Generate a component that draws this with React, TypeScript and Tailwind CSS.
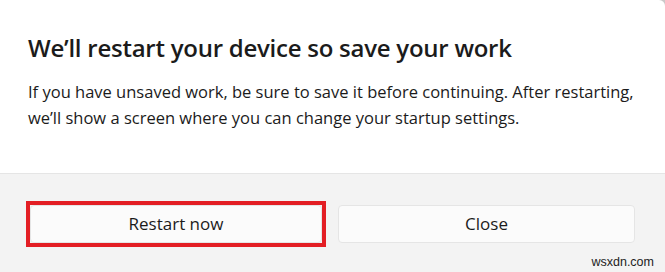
export default function App() {
  return (
    <div className="w-[665px] h-[272px] bg-[#c9c9c9]">
      <div
        className="relative w-full h-full flex flex-col rounded-tr-[6px] overflow-hidden bg-white text-[#1b1b1b]"
        style={{ fontFamily: '"Open Sans", "Noto Sans", sans-serif' }}
      >
        {/* Content */}
        <div className="h-[174px] px-[28px] pt-[30px] border-b border-[#e5e5e5]">
          <h1 className="text-[24px] leading-[36px] font-semibold tracking-[-0.25px] whitespace-nowrap">
            We’ll restart your device so save your work
          </h1>
          <p className="mt-[13px] text-[16.5px] leading-[26px] whitespace-nowrap">
            If you have unsaved work, be sure to save it before continuing. After restarting,
            <br />
            we’ll show a screen where you can change your startup settings.
          </p>
        </div>

        {/* Footer */}
        <div className="flex-1 bg-[#f3f3f3] px-[30px] pt-[31px]">
          <div className="grid grid-cols-[292px_1fr] gap-4">
            <div className="relative">
              <button className="w-full h-[38px] rounded-[4px] bg-[#fbfbfb] border border-[#e5e5e5] text-[17px]">
                Restart now
              </button>
              <div className="absolute -inset-[4px] border-[4px] border-[#e31e24] pointer-events-none" />
            </div>
            <button className="w-full h-[38px] rounded-[4px] bg-[#fbfbfb] border border-[#e5e5e5] text-[17px]">
              Close
            </button>
          </div>
        </div>

        <span
          className="absolute right-[11px] bottom-[4px] text-[12.5px] leading-none text-[#222]"
          style={{ fontFamily: '"Liberation Sans", Arial, sans-serif' }}
        >
          wsxdn.com
        </span>
      </div>
    </div>
  );
}
